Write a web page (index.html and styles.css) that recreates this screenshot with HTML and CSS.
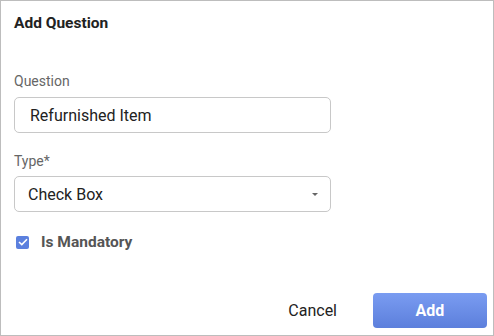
FILE: index.html
```html
<!DOCTYPE html>
<html lang="en">
<head>
  <meta charset="UTF-8" />
  <title>Add Question</title>
  <link rel="stylesheet" href="styles.css">
</head>
<body>

<div class="dialog">
  <h2 class="title">Add Question</h2>

  <label class="field-label">Question</label>
  <div class="input">Refurnished Item</div>

  <label class="field-label type-label">Type*</label>
  <div class="select">
    <span>Check Box</span>
    <span class="caret"></span>
  </div>

  <div class="check-row">
    <span class="checkbox">
      <svg width="10" height="8" viewBox="0 0 10 8"><path d="M1 4 L3.8 6.6 L9 1.2" fill="none" stroke="#fff" stroke-width="1.6"/></svg>
    </span>
    <span class="check-text">Is Mandatory</span>
  </div>

  <div class="actions">
    <button class="btn-cancel">Cancel</button>
    <button class="btn-add">Add</button>
  </div>
</div>

</body>
</html>
```

FILE: styles.css
```css
html, body {
  margin: 0;
  padding: 0;
  font-family: Roboto, "Liberation Sans", sans-serif;
  background: #fff;
  color: #222;
}

.dialog {
  box-sizing: border-box;
  width: 494px;
  height: 336px;
  border: 1px solid #bdbdbd;
  padding: 13px 6px 0 13px;
  display: flex;
  flex-direction: column;
}

.title {
  margin: 0;
  font-size: 15.5px;
  font-weight: 700;
  line-height: 18px;
  color: #222;
}

.field-label {
  margin-top: 40px;
  font-size: 14px;
  line-height: 18px;
  color: #666;
}

.type-label {
  margin-top: 19px;
}

.input, .select {
  box-sizing: border-box;
  width: 317px;
  height: 36px;
  margin-top: 7px;
  border: 1px solid #c8c8c8;
  border-radius: 5px;
  font-size: 16px;
  display: flex;
  align-items: center;
  color: #222;
}

.input {
  padding-left: 15px;
}

.select {
  margin-top: 6px;
  padding: 0 12px 0 13px;
  justify-content: space-between;
}

.caret {
  width: 0;
  height: 0;
  border-left: 3px solid transparent;
  border-right: 3px solid transparent;
  border-top: 3px solid #666;
}

.check-row {
  margin-top: 21px;
  display: flex;
  align-items: center;
  gap: 12px;
  padding-left: 2px;
}

.checkbox {
  width: 13px;
  height: 13px;
  background: #5b80de;
  border-radius: 2px;
  display: flex;
  align-items: center;
  justify-content: center;
}

.check-text {
  font-size: 15.5px;
  font-weight: 700;
  line-height: 18px;
  color: #555;
}

.actions {
  margin-top: auto;
  margin-bottom: 7px;
  display: flex;
  justify-content: flex-end;
  align-items: center;
  gap: 24px;
}

button {
  font-family: Roboto, "Liberation Sans", sans-serif;
  font-size: 16px;
  border: none;
  cursor: pointer;
}

.btn-cancel {
  background: none;
  color: #222;
  padding: 0 12px;
}

.btn-add {
  width: 114px;
  height: 35px;
  border-radius: 4px;
  background: linear-gradient(#7a9cf1, #5c7fdc);
  color: #fff;
  font-weight: 700;
}
```
